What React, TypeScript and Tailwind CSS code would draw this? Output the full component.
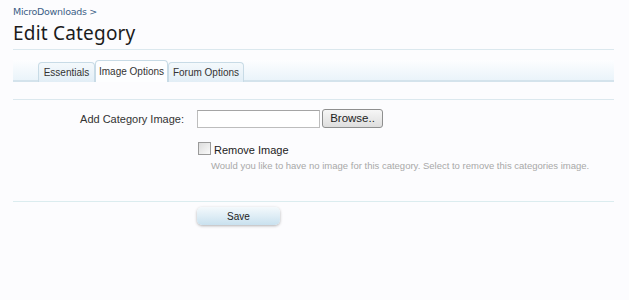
export default function App() {
  return (
    <div className="w-[629px] h-[300px] bg-[#fcfcfe] font-['Liberation_Sans',sans-serif] text-[#222]">
      <div className="pl-[13px] pr-[15px] pt-[6px]">
        {/* Breadcrumb */}
        <div className="text-[9.5px] leading-[11px] text-[#3d5f86] font-['DejaVu_Sans',sans-serif] tracking-[-0.3px]">MicroDownloads &gt;</div>
        {/* Title */}
        <h1 className="mt-[5px] text-[19px] leading-[22px] text-[#1b1b1b] font-['Noto_Sans',sans-serif] tracking-[0.2px]">Edit Category</h1>
        <div className="mt-[5px] h-px bg-[#dbe8ee]" />

        {/* Tabs */}
        <div className="mt-[10px] h-[22px] flex items-end pl-[25px] bg-[linear-gradient(to_bottom,#fdfeff,#eaf4fa)] border-b-2 border-[#d4e3ec]">
          <div className="w-[57px] h-[20px] flex items-center justify-center text-[10px] text-[#333] bg-[linear-gradient(to_bottom,#f4f9fc,#e2eef6)] border border-b-0 border-[#c8dbe6] rounded-t-[4px] mb-[-2px] pb-[1px]">Essentials</div>
          <div className="w-[73px] h-[22px] flex items-center justify-center text-[10px] text-[#333] bg-[#fdfeff] border border-b-0 border-[#c8dbe6] rounded-t-[4px] mb-[-2px]">Image Options</div>
          <div className="w-[76px] h-[20px] flex items-center justify-center text-[10px] text-[#333] bg-[linear-gradient(to_bottom,#f4f9fc,#e2eef6)] border border-b-0 border-[#c8dbe6] rounded-t-[4px] mb-[-2px] pb-[1px]">Forum Options</div>
        </div>
        <div className="mt-[17px] h-px bg-[#dbe8ee]" />

        {/* Form row */}
        <div className="mt-[9px] flex items-start">
          <div className="w-[171px] text-right text-[11px] leading-[18px] pt-[1px] text-[#333]">Add Category Image:</div>
          <div className="ml-[13px] flex flex-col">
            <div className="flex items-center">
              <div className="w-[123px] h-[18px] bg-white border border-[#bdbdbd] border-t-[#a5a5a5]" />
              <div className="ml-[2px] w-[61px] h-[19px] flex items-center justify-center text-[11.5px] text-[#222] bg-[linear-gradient(to_bottom,#f6f6f6,#dedede)] border border-[#8e8f8f] rounded-[3px]">Browse..</div>
            </div>
            <div className="mt-[12px] flex items-center">
              <div className="ml-[1px] w-[13px] h-[13px] bg-[linear-gradient(135deg,#dcdcdc,#fafafa)] border border-[#9a9a9a]" />
              <div className="ml-[3px] text-[11px] leading-[13px] text-[#222] mt-[4px]">Remove Image</div>
            </div>
            <div className="ml-[14px] mt-[3px] text-[9.5px] leading-[11px] text-[#a8a8a8] whitespace-nowrap">Would you like to have no image for this category. Select to remove this categories image.</div>
          </div>
        </div>

        <div className="mt-[30px] h-px bg-[#dbecef]" />
        <div className="mt-[5px] ml-[184px] w-[83px] h-[18px] flex items-center justify-center text-[10px] text-[#222] rounded-[5px] bg-[linear-gradient(to_bottom,#f4f9fc,#c9e1ef)] shadow-[0_1px_3px_rgba(0,0,0,0.3)]">Save</div>
      </div>
    </div>
  )
}
